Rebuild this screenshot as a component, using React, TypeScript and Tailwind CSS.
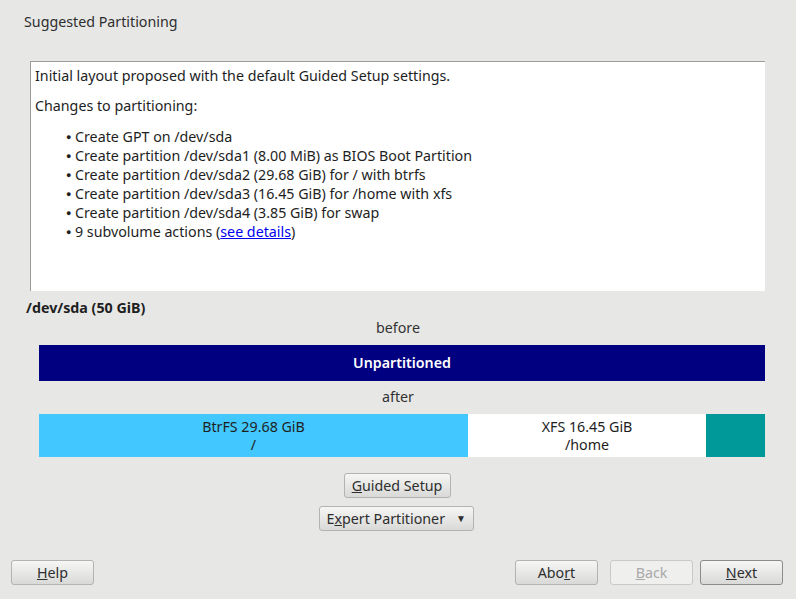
import React from "react";

function Btn({ children, className = "", disabled = false, isDefault = false }: { children: React.ReactNode; className?: string; disabled?: boolean; isDefault?: boolean }) {
  const base = disabled
    ? "bg-[#efefee] border-[#c9c9c9] text-[#a9a9a9]"
    : isDefault
    ? "bg-gradient-to-b from-[#f6f6f5] to-[#d9d9d8] border-[#8c8c8c] text-[#2e2e2e]"
    : "bg-gradient-to-b from-[#f6f6f5] to-[#d9d9d8] border-[#b3b3b3] text-[#2e2e2e]";
  return (
    <button className={`h-[25px] rounded-[3px] border flex items-center justify-center text-[14.25px] ${base} ${className}`}>
      {children}
    </button>
  );
}

const changes = [
  "Create GPT on /dev/sda",
  "Create partition /dev/sda1 (8.00 MiB) as BIOS Boot Partition",
  "Create partition /dev/sda2 (29.68 GiB) for / with btrfs",
  "Create partition /dev/sda3 (16.45 GiB) for /home with xfs",
  "Create partition /dev/sda4 (3.85 GiB) for swap",
];

export default function App() {
  return (
    <div
      className="w-[796px] h-[599px] bg-[#e7e7e6] text-[#2e2e2e] flex flex-col overflow-hidden"
      style={{ fontFamily: '"Noto Sans", sans-serif' }}
    >
      <div className="h-[42px] pl-6 pt-[12px] text-[14.25px] leading-[20px]">Suggested Partitioning</div>

      <div className="mt-[19px] ml-[30px] w-[735px] h-[230px] bg-white border-l border-t border-[#9c9c9c] pl-[4px] pt-[4px] text-[14.25px] text-[#1e1e1e]">
        <div className="leading-[19px]">Initial layout proposed with the default Guided Setup settings.</div>
        <div className="leading-[19px] mt-[11px]">Changes to partitioning:</div>
        <ul className="mt-[12px] pl-[31px]">
          {changes.map((c) => (
            <li key={c} className="flex items-center leading-[19px]">
              <span className="w-[9px] text-[9px]">●</span>
              <span>{c}</span>
            </li>
          ))}
          <li className="flex items-center leading-[19px]">
            <span className="w-[9px] text-[9px]">●</span>
            <span>
              9 subvolume actions (<span className="text-[#0000ee] underline">see details</span>)
            </span>
          </li>
        </ul>
      </div>

      <div className="pl-[26px] mt-[7px] h-[19px] leading-[19px] text-[14.25px] font-bold text-[#1e1e1e]">/dev/sda (50 GiB)</div>
      <div className="text-center text-[14.25px] leading-[19px] h-[19px] mt-[1px] text-[#333]">before</div>
      <div className="ml-[39px] w-[726px] mt-[8px] h-[36px] bg-[#000080] text-white font-semibold text-[14.25px] flex items-center justify-center">
        Unpartitioned
      </div>
      <div className="text-center text-[14.25px] leading-[19px] h-[19px] mt-[6px] text-[#333]">after</div>
      <div className="ml-[39px] w-[726px] mt-[8px] h-[43px] flex text-[14.25px] text-[#1e1e1e]">
        <div className="w-[429px] bg-[#42c8ff] flex flex-col items-center justify-center">
          <div className="leading-[18px]">BtrFS 29.68 GiB</div>
          <div className="leading-[18px]">/</div>
        </div>
        <div className="w-[238px] bg-white flex flex-col items-center justify-center">
          <div className="leading-[18px]">XFS 16.45 GiB</div>
          <div className="leading-[18px]">/home</div>
        </div>
        <div className="flex-1 bg-[#009999]" />
      </div>

      <div className="flex flex-col items-center mt-[16px] gap-[8px]">
        <Btn className="w-[107px] ml-[-2px]">
          <span><span className="underline">G</span>uided Setup</span>
        </Btn>
        <Btn className="w-[155px] ml-[-4px] justify-start pl-[7px] gap-[11px]">
          <span>E<span className="underline">x</span>pert Partitioner</span>
          <span className="text-[10px]">▼</span>
        </Btn>
      </div>

      <div className="flex mt-[29px] pl-[11px] pr-[13px]">
        <Btn className="w-[83px]">
          <span><span className="underline">H</span>elp</span>
        </Btn>
        <div className="flex-1" />
        <Btn className="w-[83px]">
          <span>Abo<span className="underline">r</span>t</span>
        </Btn>
        <Btn className="w-[83px] ml-[12px]" disabled>
          <span><span className="underline">B</span>ack</span>
        </Btn>
        <Btn className="w-[83px] ml-[7px]" isDefault>
          <span><span className="underline">N</span>ext</span>
        </Btn>
      </div>
    </div>
  );
}
